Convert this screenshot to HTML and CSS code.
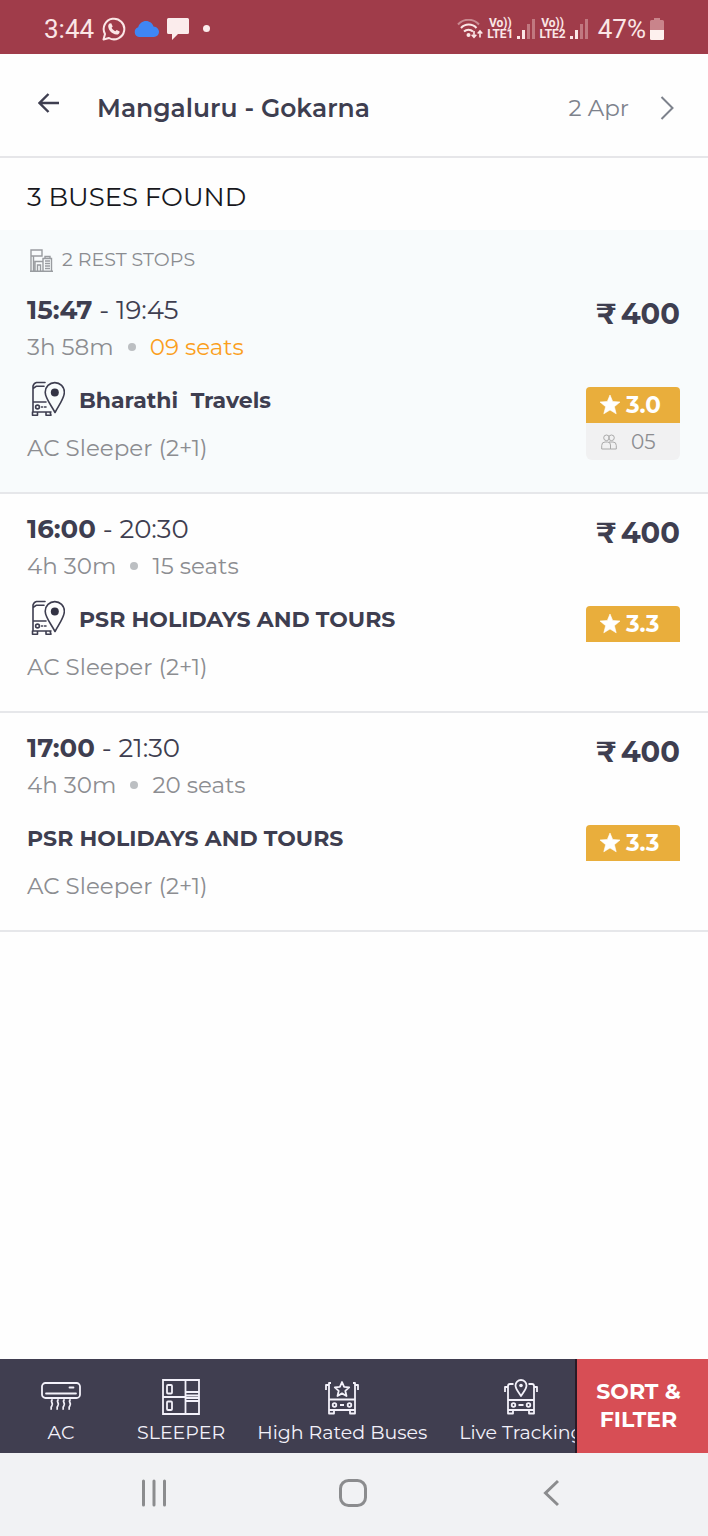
FILE: index.html
```html
<!DOCTYPE html>
<html lang="en">
<head>
<meta charset="utf-8">
<meta name="viewport" content="width=device-width, initial-scale=1">
<title>Mangaluru - Gokarna</title>
<link rel="stylesheet" href="styles.css">
</head>
<body>
<svg class="defs" aria-hidden="true">
  <symbol id="signal" viewBox="0 0 18 20"><path d="M0 17h3v3H0zM5 11h3v9H5z" fill="#fbe6e6"/><path d="M10 5h3v15h-3zM15 0h3v20h-3z" fill="#c17880"/></symbol>
  <symbol id="star" viewBox="0 0 20 20"><path d="M10 0l2.700 6.500 7.300.5-5.600 4.700 1.800 7.100L10 15l-6.200 3.800 1.800-7.100L0 7l7.300-.5z" fill="#fff" stroke="#fff" stroke-width=".6" stroke-linejoin="round"/></symbol>
  <symbol id="bus-pin" viewBox="0 0 34 36">
    <g fill="none" stroke="#3e3e50" stroke-width="1.600" stroke-linecap="round" stroke-linejoin="round">
      <path d="M14 1.500H5.500Q3 2 2 5v26h18M13 5.200H5.500L2 7.500M2 21h13M1.500 31v3.200h5V31M15 31v3.200h5l-1-3.200M10.500 26h1M13.500 26h1.500"/>
      <circle cx="6.500" cy="26" r="1.900"/>
      <path d="M24 31.500C20 24 14.200 17 14.200 11.200a9.600 9.600 0 0 1 19.200 0C33.400 17 28 24 24 31.500z"/>
    </g>
    <circle cx="23.800" cy="11.500" r="4" fill="#333344"/>
  </symbol>
</svg>

<div class="status-bar">
  <div class="status-group">
    <span class="status-text">3:44</span>
    <svg width="24" height="24" viewBox="0 0 24 24"><path d="M1.500 22.500L3 17A10.300 10.300 0 1 1 7 21z" fill="none" stroke="#fbe6e6" stroke-width="2" stroke-linejoin="round"/><path d="M7.500 6.500l1.700-.3 1.500 3.200-1.100 1.400c.9 1.700 2 2.700 3.700 3.500l1.400-1.400 3 1.500c0 2-1.500 3.200-3.200 3.100C9.800 17.200 6.500 13 6.200 9.500c0-1.200.5-2.300 1.300-3z" fill="#fbe6e6"/></svg>
    <svg width="25" height="18" viewBox="0 0 25 18"><path d="M5 17a5 5 0 0 1-.8-9.700C5 3.500 8.500 1 12 1c3.700 0 6.500 2.400 7.500 5.400 3.200.4 5.500 2.500 5.500 5.400 0 3-2.300 5.200-5 5.200z" fill="#3f86f5"/></svg>
    <svg width="22" height="23" viewBox="0 0 22 23"><path d="M1.500 1h19q1.500 0 1.500 1.500v13q0 1.500-1.500 1.500H11l-6 6v-6H1.500Q0 17 0 15.500v-13Q0 1 1.500 1z" fill="#fbecec"/></svg>
    <span class="status-dot"></span>
  </div>
  <div class="status-group status-right">
    <svg width="26" height="20" viewBox="0 0 26 20"><g fill="none" stroke="#fbe6e6" stroke-width="2"><path d="M1 5.500a14 14 0 0 1 21 0" opacity=".45"/><path d="M4 9a10.500 10.500 0 0 1 15.500 0M7 12.500a6.500 6.500 0 0 1 9 0"/></g><circle cx="11.500" cy="16" r="2" fill="#fbe6e6"/><path d="M17 12v6m-2.300-2.200L17 18.300l2.300-2.500M23 18.500V12m-2.300 2.500L23 12l2.300 2.500" fill="none" stroke="#fbe6e6" stroke-width="1.600"/></svg>
    <span class="lte">Vo))<br>LTE1</span>
    <svg width="18" height="20"><use href="#signal"/></svg>
    <span class="lte">Vo))<br>LTE2</span>
    <svg width="18" height="20"><use href="#signal"/></svg>
    <span class="status-text battery-text">47%</span>
    <svg width="14" height="22" viewBox="0 0 14 22"><path d="M4 0h6v2h2.500Q14 2 14 3.500V12H0V3.500Q0 2 1.500 2H4z" fill="#c9848b"/><path d="M0 12h14v8.500q0 1.500-1.500 1.500h-11Q0 22 0 20.500z" fill="#fdf0ee"/></svg>
  </div>
</div>

<header class="header">
  <button class="icon-button back" aria-label="Back"><svg width="22" height="20" viewBox="0 0 22 20"><path d="M21 10H2M10.500 1L1.500 10l9 9" fill="none" stroke="#3e3e50" stroke-width="2.400"/></svg></button>
  <h1 class="title">Mangaluru - Gokarna</h1>
  <button class="date">2 Apr <svg width="14" height="24" viewBox="0 0 14 24"><path d="M1.500 1l11 11-11 11" fill="none" stroke="#7d828c" stroke-width="2"/></svg></button>
</header>

<main class="results">
  <h2 class="found">3 BUSES FOUND</h2>

  <article class="bus bus-highlight">
    <div class="stops"><svg width="23" height="23" viewBox="0 0 23 23"><g fill="none" stroke="#999ca0" stroke-width="1.400"><path d="M1 1h11v6H1zM1 7v15M3.500 7v15M0 22.200h23M5 22V12.500h8V22M7.500 22v-6h3v6M13 22V9.500h8.500V22M15 9V7.500h5V9M15 12h5M15 14.500h5M15 17h5M15 19.500h5"/></g></svg>2 REST STOPS</div>
    <div class="bus-body">
      <div class="details">
        <div class="times"><strong>15:47</strong> - 19:45</div>
        <div class="meta"><span>3h 58m</span><i class="dot"></i><span class="few">09 seats</span></div>
        <h3 class="operator"><svg width="34" height="36"><use href="#bus-pin"/></svg><span class="name">Bharathi&nbsp; Travels</span></h3>
        <div class="type">AC Sleeper (2+1)</div>
      </div>
      <div class="side">
        <div class="price"><span>₹</span><span>400</span></div>
        <div class="rating"><svg width="20" height="20"><use href="#star"/></svg>3.0</div>
        <div class="reviews"><svg width="16" height="16" viewBox="0 0 16 16"><g fill="none" stroke="#aaa" stroke-width="1"><circle cx="5.500" cy="3.800" r="2.800"/><circle cx="10.500" cy="3.800" r="2.800"/><path d="M.7 15v-3.500Q.7 8 4 8h2.500Q9.500 8 9.500 11v4zM9.500 15h5.800v-3.500Q15.300 8 12 8H8"/></g></svg>05</div>
      </div>
    </div>
  </article>

  <article class="bus">
    <div class="bus-body">
      <div class="details">
        <div class="times"><strong>16:00</strong> - 20:30</div>
        <div class="meta"><span>4h 30m</span><i class="dot"></i><span>15 seats</span></div>
        <h3 class="operator"><svg width="34" height="36"><use href="#bus-pin"/></svg><span class="name">PSR HOLIDAYS AND TOURS</span></h3>
        <div class="type">AC Sleeper (2+1)</div>
      </div>
      <div class="side">
        <div class="price"><span>₹</span><span>400</span></div>
        <div class="rating"><svg width="20" height="20"><use href="#star"/></svg>3.3</div>
      </div>
    </div>
  </article>

  <article class="bus">
    <div class="bus-body">
      <div class="details">
        <div class="times"><strong>17:00</strong> - 21:30</div>
        <div class="meta"><span>4h 30m</span><i class="dot"></i><span>20 seats</span></div>
        <h3 class="operator"><span class="name">PSR HOLIDAYS AND TOURS</span></h3>
        <div class="type">AC Sleeper (2+1)</div>
      </div>
      <div class="side">
        <div class="price"><span>₹</span><span>400</span></div>
        <div class="rating"><svg width="20" height="20"><use href="#star"/></svg>3.3</div>
      </div>
    </div>
  </article>
</main>

<footer class="filter-bar">
  <div class="filters">
    <button class="filter"><svg width="40" height="36" viewBox="0 0 40 36"><g fill="none" stroke="#f3f1fa" stroke-width="1.800" stroke-linecap="round"><rect x="1" y="4" width="38" height="15" rx="3.500"/><path d="M5 14.500h30M28.500 8.500h4"/><path d="M11 21c-2 2 1.800 3.500 0 5.500-.8 1-1.500 2-.8 3.500M17 21c-2 2 1.800 3.500 0 5.500-.8 1-1.500 2-.8 3.500M23 21c-2 2 1.800 3.500 0 5.500-.8 1-1.500 2-.8 3.500M29 21c-2 2 1.800 3.500 0 5.500-.8 1-1.500 2-.8 3.500"/></g></svg>AC</button>
    <button class="filter"><svg width="38" height="36" viewBox="0 0 38 36"><g fill="none" stroke="#f3f1fa" stroke-width="1.800"><path d="M1 1h36v34H1zM23.500 1v34M1 18h22.500M23.500 13H37M23.500 16.500H37M23.500 19H37M23.500 22H37"/><rect x="5" y="6" width="5" height="8.500" rx="1"/><rect x="5" y="22.500" width="5" height="8.500" rx="1"/></g></svg>SLEEPER</button>
    <button class="filter"><svg width="34" height="36" viewBox="0 0 34 36"><g fill="none" stroke="#f3f1fa" stroke-width="1.800" stroke-linejoin="round"><path d="M6 4H4v27h26V4h-2M4 20.500h26M4 31v3.500h5V31M25 31v3.500h5V31M4 6H1v5M30 6h3v5M15 26h4"/><circle cx="9.500" cy="26" r="1.800"/><circle cx="24.500" cy="26" r="1.800"/><path d="M17 3l2.100 4.800 5.100.5-3.900 3.500 1.200 5.200L17 14.400 12.500 17l1.200-5.200-3.900-3.500 5.100-.5z"/></g></svg>High Rated Buses</button>
    <button class="filter"><svg width="34" height="36" viewBox="0 0 34 36"><g fill="none" stroke="#f3f1fa" stroke-width="1.800" stroke-linejoin="round"><path d="M9.500 5H6Q4 5 4 7v24h26V7q0-2-2-2h-3.500M4 21h26M4 31v3.500h5V31M25 31v3.500h5V31M4 8H1v5M30 8h3v5M14.500 26h5"/><circle cx="9.500" cy="26" r="1.800"/><circle cx="24.500" cy="26" r="1.800"/><path d="M17 17C14.500 13 11.500 10 11.500 6.500a5.500 5.500 0 0 1 11 0C22.500 10 19.500 13 17 17z"/></g><circle cx="17" cy="6.500" r="1.800" fill="#f3f1fa"/></svg>Live Tracking</button>
  </div>
  <button class="sort">SORT &amp;<br>FILTER</button>
</footer>

<nav class="system-nav">
  <button class="icon-button" aria-label="Recents"><svg width="26" height="28" viewBox="0 0 26 28"><path d="M2.500 2v24M13 2v24M23.500 2v24" stroke="#8b8c8e" stroke-width="3" stroke-linecap="round"/></svg></button>
  <button class="icon-button" aria-label="Home"><svg width="28" height="28" viewBox="0 0 28 28"><rect x="1.500" y="1.500" width="25" height="25" rx="8" fill="none" stroke="#8b8c8e" stroke-width="3"/></svg></button>
  <button class="icon-button" aria-label="Back"><svg width="16" height="28" viewBox="0 0 16 28"><path d="M15 2L2.500 14 15 26" fill="none" stroke="#8b8c8e" stroke-width="3"/></svg></button>
</nav>
</body>
</html>
```

FILE: styles.css
```css
* { box-sizing: border-box; }

body {
  margin: 0;
  min-height: 100vh;
  display: flex;
  flex-direction: column;
  background: #fefefe;
  color: #3e3e50;
  font-family: Montserrat, Inter, sans-serif;
}

svg { display: block; flex: none; }
.defs { position: absolute; width: 0; height: 0; }

button {
  margin: 0;
  padding: 0;
  border: 0;
  background: none;
  color: inherit;
  font: inherit;
}

h1, h2, h3 { margin: 0; }

.status-bar {
  display: flex;
  justify-content: space-between;
  align-items: center;
  height: 54px;
  padding: 3px 44px 0;
  background: #a03c4a;
  color: #fbe6e6;
  font-family: Roboto, sans-serif;
}

.status-group { display: flex; align-items: center; gap: 8px; }
.status-right { gap: 4px; }
.status-text { font-size: 26px; line-height: 32px; }
.battery-text { padding-left: 6px; }
.status-dot { width: 7px; height: 7px; margin-left: 6px; border-radius: 50%; background: #fbecec; }
.lte { font-size: 12px; line-height: 11px; font-weight: 700; text-align: center; }

.header {
  display: flex;
  align-items: center;
  height: 104px;
  padding: 6px 34px 0 38px;
  border-bottom: 2px solid #e6e6e9;
}

.icon-button { display: flex; align-items: center; justify-content: center; }
.back { padding-bottom: 10px; }
.title { flex: 1; margin-left: 37px; font-size: 25px; line-height: 36px; font-weight: 600; }
.date { display: flex; align-items: center; gap: 31px; color: #7d828c; font-size: 23px; line-height: 36px; }

.results { flex: 1; }
.found { padding: 21px 27px 15px; color: #17171c; font-size: 26px; line-height: 36px; font-weight: 400; }

.bus { padding: 17px 28px 20px 27px; border-bottom: 2px solid #e6e7ea; }
.bus-highlight { background: #f8fbfc; }
.bus-body { display: flex; justify-content: space-between; }

.stops {
  display: flex;
  align-items: center;
  gap: 9px;
  margin-bottom: 19px;
  padding-left: 3px;
  color: #8a8c90;
  font-size: 19px;
  line-height: 26px;
}

.times { font-size: 26px; line-height: 36px; }
.times strong { font-weight: 700; }
.meta { display: flex; align-items: center; color: #8c8d91; font-size: 23px; line-height: 38px; }
.dot { width: 8px; height: 8px; margin: 0 14px; border-radius: 50%; background: #bcbfc2; }
.few { color: #fb9f1c; }
.operator { display: flex; align-items: center; gap: 14px; height: 48px; margin-top: 10px; font-size: 22px; font-weight: 700; }
.operator svg { margin: 0 0 2px 4px; }
.type { color: #8c8d91; font-size: 23px; line-height: 48px; }

.side { display: flex; flex-direction: column; width: 94px; }
.price { display: flex; justify-content: flex-end; gap: 4px; margin-bottom: 51px; font-size: 29px; line-height: 44px; font-weight: 700; }
.rating {
  display: flex;
  align-items: center;
  gap: 6px;
  height: 36px;
  padding-left: 14px;
  border-radius: 4px 4px 0 0;
  background: #e9ae3c;
  color: #fff;
  font-size: 23px;
  font-weight: 700;
}
.reviews {
  display: flex;
  align-items: center;
  gap: 14px;
  height: 37px;
  padding-left: 15px;
  border-radius: 0 0 6px 6px;
  background: #f1f1f2;
  color: #8c8d91;
  font-size: 20px;
}

.filter-bar { display: flex; height: 94px; background: #403e50; color: #f3f1fa; }
.filters { display: flex; flex: 1; min-width: 0; padding-left: 1px; overflow: hidden; border-right: 2px solid #2a1a26; }
.filter {
  display: flex;
  flex: none;
  flex-direction: column;
  align-items: center;
  gap: 4px;
  min-width: 120px;
  padding: 20px 16px 0;
  font-size: 19px;
  line-height: 28px;
  white-space: nowrap;
}
.sort { width: 131px; padding-right: 8px; background: #d74e55; color: #fff; font-size: 22px; line-height: 28px; font-weight: 700; }

.system-nav {
  display: grid;
  grid-template-columns: repeat(3, 28px);
  justify-content: space-between;
  align-items: center;
  height: 83px;
  padding: 0 143px 4px 140px;
  background: #f1f2f4;
}
```
